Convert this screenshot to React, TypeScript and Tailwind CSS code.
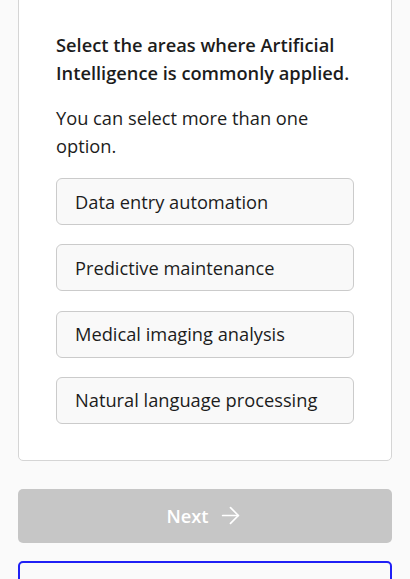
import { ArrowRight } from "lucide-react";

const OPTIONS = [
  "Data entry automation",
  "Predictive maintenance",
  "Medical imaging analysis",
  "Natural language processing",
];

export default function App() {
  return (
    <div className="min-h-[579px] overflow-hidden bg-[#fafafa] px-[18px] font-['Open_Sans',sans-serif] text-[#1c1c1c]">
      <section className="-mt-[8px] rounded-[5px] border border-[#d5d5d5] bg-white px-[37px] pb-[36px] pt-[38px]">
        <h2 className="text-[18.25px] font-semibold leading-[28px]">
          Select the areas where Artificial Intelligence is commonly applied.
        </h2>
        <p className="mt-[17px] text-[18.25px] leading-[28px]">You can select more than one option.</p>
        <div className="mt-[18px] flex flex-col gap-[19.3px]">
          {OPTIONS.map((label) => (
            <button
              key={label}
              type="button"
              className="flex h-[47px] items-center rounded-[6px] border border-[#cbcbcb] bg-[#f9f9f9] px-[18px] text-left text-[18.25px] leading-[28px] text-[#1c1c1c]"
            >
              {label}
            </button>
          ))}
        </div>
      </section>
      <button
        type="button"
        disabled
        className="mt-[28px] flex h-[54px] w-full items-center justify-center gap-[8px] rounded-[5px] bg-[#c6c6c6] text-[18.25px] font-semibold text-white"
      >
        Next
        <ArrowRight size={27} strokeWidth={1.5} />
      </button>
      <div className="mt-[18px] h-[60px] rounded-[5px] border-2 border-[#2020f5] bg-[#fafafa]" />
    </div>
  );
}
